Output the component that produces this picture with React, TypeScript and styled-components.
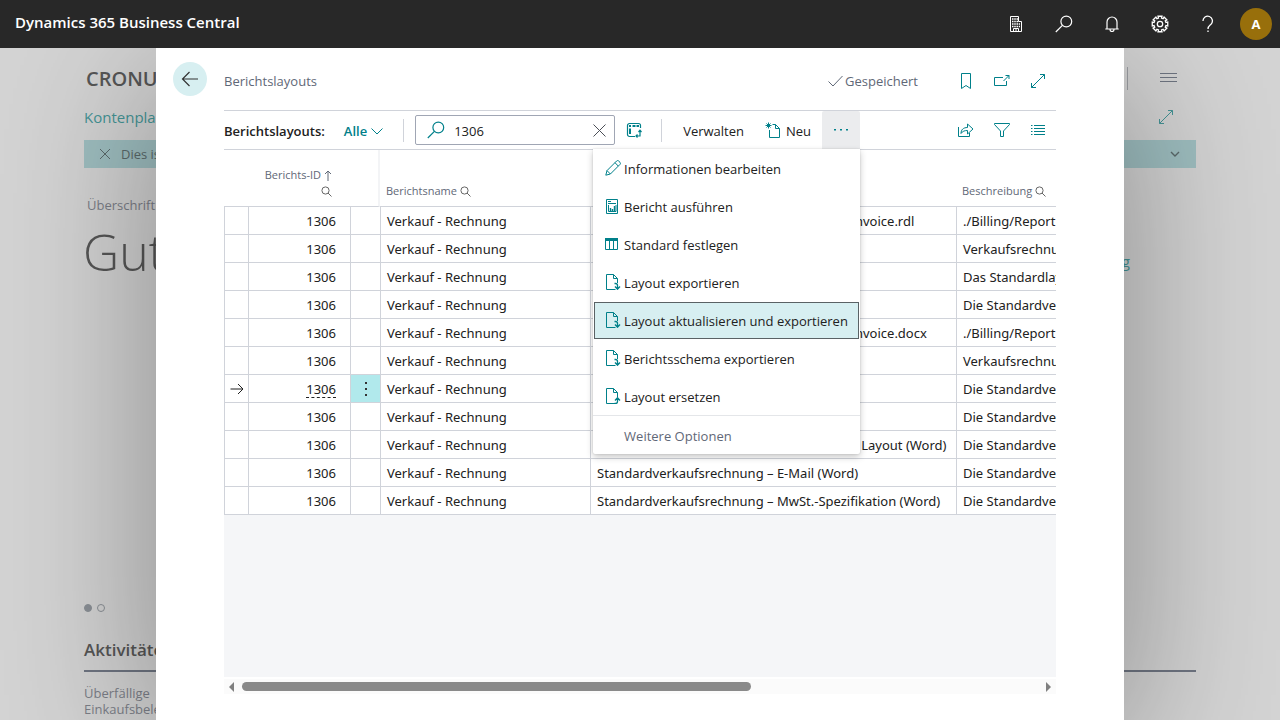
import React from "react";
import styled, { createGlobalStyle } from "styled-components";

const teal = "#00808a";
const line = "#d0d3da";
const ink = "#212121";
const muted = "#5f6877";

const GlobalStyle = createGlobalStyle`
  *, *::before, *::after { box-sizing: border-box; }
  body {
    margin: 0;
    font-family: "Open Sans", "Noto Sans", sans-serif;
    font-size: 13px;
    line-height: 20px;
    color: ${ink};
    background: #d4d4d4;
  }
  button, input { font: inherit; color: inherit; }
  button { border: 0; padding: 0; background: none; cursor: pointer; }
  a { color: inherit; text-decoration: none; }
  svg { display: block; flex: none; }
`;

const Page = styled.div`
  display: flex;
  flex-direction: column;
  min-height: 100vh;
`;

/* ---------- top bar ---------- */

const TopBar = styled.header`
  display: flex;
  align-items: center;
  justify-content: space-between;
  height: 48px;
  padding: 0 8px 0 15px;
  background: #282828;
  color: #fff;
`;

const Product = styled.a`
  font-size: 15px;
  font-weight: 600;
  padding-bottom: 4px;
`;

const TopActions = styled.nav`
  display: flex;
  align-items: center;
`;

const TopButton = styled.button`
  display: grid;
  place-items: center;
  width: 48px;
  height: 48px;
  color: #fff;
`;

const Avatar = styled.button`
  width: 32px;
  height: 32px;
  margin-left: 8px;
  border-radius: 50%;
  background: #986f0b;
  color: #fff;
  font-weight: 700;
`;

/* ---------- role centre behind the dialog ---------- */

const Workspace = styled.div`
  flex: 1;
  display: grid;
  grid-template-columns: minmax(0, 1fr);
  overflow: hidden;
`;

const RoleCenter = styled.div`
  grid-area: 1 / 1;
  display: flex;
  flex-direction: column;
  padding: 0 84px;
  color: #575757;
`;

const CompanyRow = styled.div`
  display: flex;
  align-items: center;
  justify-content: space-between;
  height: 60px;
  padding: 0 19px 0 2px;
`;

const Company = styled.span`
  padding-top: 2px;
  font-size: 20px;
  font-weight: 600;
`;

const CompanyTools = styled.div`
  display: flex;
  align-items: center;
  gap: 32px;
  color: #6f7582;
`;

const ToolDivider = styled.span`
  width: 1px;
  height: 23px;
  background: #9d9fa4;
`;

const NavRow = styled.div`
  display: flex;
  align-items: center;
  justify-content: space-between;
  height: 32px;
  padding: 0 22px 14px 0;
  font-size: 15px;
  color: #459496;
`;

const Notice = styled.div`
  display: flex;
  align-items: center;
  gap: 9px;
  height: 28px;
  padding: 0 14px;
  background: #9fbfc1;
  color: #5b6a6b;
  & > span { flex: 1; }
`;

const Headline = styled.div`
  display: flex;
  align-items: flex-start;
  justify-content: space-between;
  padding: 27px 66px 0 3px;
`;

const HeadlineLabel = styled.div`
  color: #7c7f88;
`;

const Greeting = styled.div`
  margin-left: -4px;
  font-size: 50px;
  line-height: 74px;
  font-weight: 300;
`;

const HeadlineLink = styled.a`
  margin-top: 56px;
  font-size: 15px;
  color: #459496;
`;

const Dots = styled.div`
  display: flex;
  gap: 5px;
  margin-top: 315px;
`;

const Dot = styled.span<{ $on?: boolean }>`
  width: 8px;
  height: 8px;
  border-radius: 50%;
  border: 1px solid #8b9096;
  background: ${(p) => (p.$on ? "#8b9096" : "transparent")};
`;

const Activities = styled.section`
  margin-top: 26px;
`;

const ActivitiesTitle = styled.h2`
  margin: 0;
  padding-bottom: 8px;
  border-bottom: 2px solid #6f7582;
  font-size: 17px;
  line-height: 24px;
  font-weight: 600;
`;

const Cue = styled.div`
  width: 110px;
  padding-top: 13px;
  line-height: 16px;
  color: #7c7f88;
`;

/* ---------- dialog ---------- */

const Overlay = styled.div`
  grid-area: 1 / 1;
  z-index: 1;
  display: flex;
  padding: 0 156px;
`;

const Dialog = styled.main`
  flex: 1;
  min-width: 0;
  display: flex;
  flex-direction: column;
  padding-bottom: 26px;
  background: #fff;
  box-shadow: 0 28px 150px rgba(0, 0, 0, 0.36);
`;

const DialogHeader = styled.div`
  display: flex;
  align-items: center;
  height: 62px;
  padding: 0 68px 0 17px;
  color: ${muted};
`;

const Back = styled.button`
  display: grid;
  place-items: center;
  width: 34px;
  height: 34px;
  border-radius: 50%;
  background: #d7eff1;
  color: #333;
`;

const DialogTitle = styled.h1`
  flex: 1;
  margin: 0;
  padding: 4px 0 0 17px;
  font-size: 13px;
  font-weight: 400;
`;

const Saved = styled.span`
  display: flex;
  align-items: center;
  gap: 2px;
  padding-top: 4px;
  margin-right: 30px;
`;

const IconGroup = styled.div`
  display: flex;
  align-items: center;
  color: ${teal};
`;

const HeaderIcons = styled(IconGroup)`
  padding-top: 4px;
`;

const IconButton = styled.button`
  display: grid;
  place-items: center;
  width: 36px;
  height: 36px;
`;

const DialogBody = styled.div`
  flex: 1;
  display: flex;
  flex-direction: column;
  margin: 0 68px;
`;

const Toolbar = styled.div`
  display: flex;
  align-items: center;
  height: 40px;
  border: solid ${line};
  border-width: 1px 0;
`;

const ViewName = styled.span`
  padding-top: 2px;
  font-weight: 600;
  margin-right: 19px;
`;

const ViewButton = styled.button`
  display: flex;
  align-items: center;
  gap: 4px;
  padding-top: 2px;
  font-weight: 600;
  color: ${teal};
`;

const Divider = styled.span`
  width: 1px;
  height: 23px;
  margin: 0 11px 0 20px;
  background: ${line};
`;

const SearchBox = styled.label`
  display: flex;
  align-items: center;
  width: 200px;
  height: 30px;
  padding: 0 8px 0 11px;
  border: 1px solid #a0a6b4;
  border-radius: 2px;
  color: ${teal};
`;

const SearchInput = styled.input`
  flex: 1;
  min-width: 0;
  height: 26px;
  margin-left: 9px;
  padding: 2px 0 0;
  border: 0;
  outline: 0;
  background: none;
  color: ${ink};
`;

const ClearButton = styled.button`
  padding-top: 1px;
  color: #4b4f57;
`;

const AnalyzeButton = styled.button`
  display: grid;
  place-items: center;
  width: 38px;
  height: 36px;
  margin-right: -12px;
  color: ${teal};
`;

const ActionButton = styled.button`
  display: flex;
  align-items: center;
  gap: 5px;
  height: 38px;
  padding: 1px 11px 0 10px;
  & > svg { color: ${teal}; margin-bottom: 2px; }
`;

const MoreAnchor = styled.div`
  position: relative;
  flex: 1;
`;

const MoreButton = styled.button`
  display: grid;
  place-items: center;
  width: 38px;
  height: 38px;
  border-radius: 2px 2px 0 0;
  background: #ebecee;
  color: ${teal};
`;

const Menu = styled.div`
  position: absolute;
  z-index: 2;
  top: 38px;
  left: -229px;
  width: 267px;
  background: #fff;
  box-shadow: 0 3px 7px rgba(0, 0, 0, 0.22), 0 0 2px rgba(0, 0, 0, 0.14);
  border-radius: 0 0 2px 2px;
`;

const MenuItem = styled.button<{ $active?: boolean }>`
  display: flex;
  align-items: center;
  gap: 3px;
  width: calc(100% - 2px);
  height: 37px;
  margin: 0 1px;
  padding: 0 0 0 10px;
  border: 1px solid ${(p) => (p.$active ? "#5a6265" : "transparent")};
  background: ${(p) => (p.$active ? "#d7eff1" : "transparent")};
  white-space: nowrap;
  text-align: left;
  & > svg { color: ${teal}; margin-bottom: 2px; }
`;

const MenuList = styled.div`
  display: flex;
  flex-direction: column;
  gap: 1px;
  padding-top: 1px;
  border-bottom: 1px solid #e4e6e9;
`;

const MenuMore = styled.button`
  display: block;
  width: 100%;
  height: 38px;
  padding: 2px 0 0 31px;
  text-align: left;
  color: ${muted};
`;

/* ---------- grid ---------- */

const GridArea = styled.div`
  flex: 1;
  background: #f5f6f8;
  overflow: hidden;
`;

const Grid = styled.table`
  width: 100%;
  table-layout: fixed;
  border-collapse: separate;
  border-spacing: 0;
  background: #fff;
`;

const GridBody = styled.tbody`
  font-family: "Noto Sans", "Open Sans", sans-serif;
`;

const Col = styled.col<{ $w?: number }>`
  width: ${(p) => (p.$w ? `${p.$w}px` : "auto")};
`;

const HeadCell = styled.th<{ $right?: boolean; $mark?: boolean }>`
  height: 57px;
  padding: 0 0 7px 6px;
  padding-right: ${(p) => (p.$right ? "18px" : "0")};
  border-bottom: 1px solid ${line};
  border-right: ${(p) => (p.$mark ? "2px solid #f3f4f6" : "0")};
  vertical-align: bottom;
  text-align: ${(p) => (p.$right ? "right" : "left")};
  font-size: 11px;
  line-height: 16px;
  font-weight: 400;
  color: ${muted};
  white-space: nowrap;
`;

const HeadInner = styled.span<{ $end?: boolean }>`
  display: flex;
  align-items: center;
  justify-content: ${(p) => (p.$end ? "flex-end" : "flex-start")};
  gap: 3px;
  height: 16px;
`;

const Cell = styled.td<{ $right?: boolean; $center?: boolean; $hot?: boolean }>`
  height: 28px;
  padding: ${(p) => (p.$center ? "0" : p.$right ? "0 14px 0 0" : "0 0 0 6px")};
  border: solid ${line};
  border-width: 0 0 1px 1px;
  text-align: ${(p) => (p.$right ? "right" : "left")};
  background: ${(p) => (p.$hot ? "#b1e9ec" : "transparent")};
  white-space: nowrap;
  overflow: hidden;
  & > svg { margin: 0 auto; }
`;

const IdLink = styled.a<{ $current?: boolean }>`
  display: inline-block;
  line-height: 16px;
  border-bottom: 1px ${(p) => (p.$current ? "dashed #212121" : "solid transparent")};
`;

const RowMenu = styled.button`
  display: grid;
  place-items: center;
  width: 100%;
  height: 27px;
`;

const ScrollBar = styled.div`
  display: flex;
  align-items: center;
  gap: 4px;
  height: 15px;
  margin-top: 2px;
  padding: 0 4px;
  background: #fbfbfb;
  color: #808080;
`;

const Track = styled.div`
  flex: 1;
`;

const Thumb = styled.div`
  width: 64%;
  height: 9px;
  border-radius: 5px;
  background: #8a8a8a;
`;

/* ---------- icons ---------- */

type IconProps = { d: string; w?: number; h?: number; sw?: number; children?: React.ReactNode };

const Icon = ({ d, w = 16, h = 16, sw = 1, children }: IconProps) => (
  <svg width={w} height={h} viewBox={`0 0 ${w} ${h}`} fill="none" stroke="currentColor" strokeWidth={sw} aria-hidden="true">
    <path d={d} />
    {children}
  </svg>
);

const gearOutline = (() => {
  const pts: string[] = [];
  for (let i = 0; i < 8; i++) {
    const a = (i * Math.PI) / 4;
    const at = (r: number, o: number) => `${(9 + r * Math.cos(a + o)).toFixed(2)} ${(9 + r * Math.sin(a + o)).toFixed(2)}`;
    pts.push(at(6.1, -0.25), at(8, -0.25), at(8, 0.25), at(6.1, 0.25));
  }
  return `M${pts.join("L")}Z`;
})();

const SearchGlyph = () => (
  <svg width="18" height="18" viewBox="0 0 18 18" fill="none" stroke="currentColor" strokeWidth="1.2" aria-hidden="true">
    <circle cx="11.3" cy="6.5" r="5.4" />
    <path d="M7.4 10.4L.8 17" />
  </svg>
);

const SmallSearch = () => (
  <svg width="11" height="11" viewBox="0 0 11 11" fill="none" stroke="#666" aria-hidden="true">
    <circle cx="4.5" cy="4.5" r="3.6" />
    <path d="M7 7l3.5 3.5" />
  </svg>
);

const Expand = () => <Icon d="M1.5 14.5l13-13M10 1.500h4.500V6M1.500 10v4.500H6" />;

const docBody = "M10.5 15.5H1.5V.5h7l4 4V9M8.5 .5v4h4";
const menuIcons = {
  edit: <Icon d="M.8 15.2L2 10.6 11.6 1a1.5 1.5 0 0 1 2.1 0l1.3 1.3a1.5 1.5 0 0 1 0 2.1L5.4 14zM2 10.6L5.4 14M10 2.7l3.3 3.4" />,
  run: (
    <Icon d="M1.5 1.5h11v14h-11z">
      <path d="M3 3.5h3M3 5.5h8" />
      <path d="M3.5 7v6.5h7.5V7" />
      <path d="M5.5 13v-3M7.5 13v-2M9.5 13V8" strokeWidth="1.4" />
    </Icon>
  ),
  table: (
    <Icon d="M.5 2.500h12v11H.5zM4.500 4v9M8.500 4v9">
      <path d="M0 3.5h13" strokeWidth="3" />
    </Icon>
  ),
  export: (
    <Icon d={docBody}>
      <path d="M9.5 9.5h1q2 0 2 2v3.5M10 12.5l2.500 2.700 2.500-2.700" strokeWidth="1.3" />
    </Icon>
  ),
  replace: (
    <Icon d={docBody}>
      <path d="M9.5 15.5h1q2 0 2-2V10M10 12.5l2.500-2.700 2.500 2.700" strokeWidth="1.3" />
    </Icon>
  ),
};

/* ---------- data ---------- */

const actions: { icon: keyof typeof menuIcons; label: string; active?: boolean }[] = [
  { icon: "edit", label: "Informationen bearbeiten" },
  { icon: "run", label: "Bericht ausführen" },
  { icon: "table", label: "Standard festlegen" },
  { icon: "export", label: "Layout exportieren" },
  { icon: "export", label: "Layout aktualisieren und exportieren", active: true },
  { icon: "export", label: "Berichtsschema exportieren" },
  { icon: "replace", label: "Layout ersetzen" },
];

const rows: { layout: string; text: string; current?: boolean }[] = [
  { layout: "./Billing/Reports/Contracts/StandardSalesInvoice.rdl", text: "./Billing/Report Extensions" },
  { layout: "Verkaufsrechnung", text: "Verkaufsrechnung" },
  { layout: "Standardlayout", text: "Das Standardlayout" },
  { layout: "Standardverkaufsrechnung", text: "Die Standardverkaufsrechnung" },
  { layout: "./Billing/Reports/Contracts/StandardSalesInvoice.docx", text: "./Billing/Report Extensions" },
  { layout: "Verkaufsrechnung", text: "Verkaufsrechnung" },
  { layout: "Standardverkaufsrechnung", text: "Die Standardverkaufsrechnung", current: true },
  { layout: "Standardverkaufsrechnung", text: "Die Standardverkaufsrechnung" },
  { layout: "Standardverkaufsrechnung – Designfähige Layout (Word)", text: "Die Standardverkaufsrechnung" },
  { layout: "Standardverkaufsrechnung – E-Mail (Word)", text: "Die Standardverkaufsrechnung" },
  { layout: "Standardverkaufsrechnung – MwSt.-Spezifikation (Word)", text: "Die Standardverkaufsrechnung" },
];

export default function App() {
  return (
    <Page>
      <GlobalStyle />
      <TopBar>
        <Product href="#">Dynamics 365 Business Central</Product>
        <TopActions>
          <TopButton aria-label="Umgebung">
            <Icon w={12} h={16} d="M.5 .5h8v5h3v10H.5zM3.500 15.500v-3h5v3M6 12.500v3">
              <path d="M2 3h6M2 5.500h6M2 8h8M2 10.500h8" strokeWidth="1.5" strokeDasharray="1.500 .75" />
            </Icon>
          </TopButton>
          <TopButton aria-label="Suchen"><SearchGlyph /></TopButton>
          <TopButton aria-label="Benachrichtigungen">
            <Icon w={14} h={16} sw={1.2} d="M.3 13h13.400M2 13V6a5 5 0 0 1 10 0v7M5 13.500a2 2 0 0 0 4 0" />
          </TopButton>
          <TopButton aria-label="Einstellungen">
            <Icon w={18} h={18} sw={1.3} d={gearOutline}><circle cx="9" cy="9" r="2.7" /></Icon>
          </TopButton>
          <TopButton aria-label="Hilfe">
            <Icon w={12} h={18} sw={1.3} d="M1 6a4.700 4.700 0 1 1 8 3.200C7.200 10.700 6 11.300 6 14M6 15.500v1.600" />
          </TopButton>
          <Avatar aria-label="Konto">A</Avatar>
        </TopActions>
      </TopBar>

      <Workspace>
        <RoleCenter>
          <CompanyRow>
            <Company>CRONUS</Company>
            <CompanyTools>
              <ToolDivider />
              <Icon w={17} h={10} d="M0 .5h17M0 4.500h17M0 8.500h17" />
            </CompanyTools>
          </CompanyRow>
          <NavRow>
            <a href="#">Kontenplan</a>
            <Expand />
          </NavRow>
          <Notice>
            <Icon w={14} h={12} d="M2 1l10 10M12 1L2 11" />
            <span>Dies ist</span>
            <Icon w={14} h={8} sw={1.4} d="M3 2l4 4 4-4" />
          </Notice>
          <Headline>
            <div>
              <HeadlineLabel>Überschrift</HeadlineLabel>
              <Greeting>Guten</Greeting>
            </div>
            <HeadlineLink href="#">Rechnung</HeadlineLink>
          </Headline>
          <Dots><Dot $on /><Dot /></Dots>
          <Activities>
            <ActivitiesTitle>Aktivitäten</ActivitiesTitle>
            <Cue>Überfällige Einkaufsbelege</Cue>
          </Activities>
        </RoleCenter>

        <Overlay>
          <Dialog>
            <DialogHeader>
              <Back aria-label="Zurück"><Icon w={18} h={16} sw={1.2} d="M17 8H1.500M8.500 1l-7 7 7 7" /></Back>
              <DialogTitle>Berichtslayouts</DialogTitle>
              <Saved>
                <Icon w={15} h={12} d="M.5 6.500l4.500 4.500L14.500 1" />
                Gespeichert
              </Saved>
              <HeaderIcons>
                <IconButton aria-label="Lesezeichen"><Icon w={12} h={16} d="M1.500 .5h9v15L6 12.500l-4.500 3z" /></IconButton>
                <IconButton aria-label="In neuem Fenster öffnen"><Icon d="M9 4.500H.5v8h12V8M9.500 8L15 2.500M11.500 2.500h3.500V6" /></IconButton>
                <IconButton aria-label="Vergrößern"><Expand /></IconButton>
              </HeaderIcons>
            </DialogHeader>

            <DialogBody>
              <Toolbar>
                <ViewName>Berichtslayouts:</ViewName>
                <ViewButton>
                  Alle
                  <Icon w={12} h={8} d="M.5 1.500L6 7l5.500-5.500" />
                </ViewButton>
                <Divider />
                <SearchBox>
                  <SearchGlyph />
                  <SearchInput aria-label="Suchen" defaultValue="1306" />
                  <ClearButton aria-label="Suche löschen"><Icon w={13} h={13} d="M.5 .5l12 12M12.500 .5l-12 12" /></ClearButton>
                </SearchBox>
                <AnalyzeButton aria-label="Analysieren">
                  <Icon d="M9 14.500H3.500a2 2 0 0 1-2-2v-9a2 2 0 0 1 2-2h9a2 2 0 0 1 2 2V6" sw={1.2}>
                    <path d="M3 4h2M6.500 4h3M10.500 4h2.500" strokeWidth="2" />
                    <path d="M4 6.500v5.500" strokeWidth="2" />
                    <path d="M10 14h4V8.500M12.500 10l1.500-1.800L15.500 10M11.500 12.500L10 14l1.500 1.500" />
                  </Icon>
                </AnalyzeButton>
                <Divider />
                <ActionButton>Verwalten</ActionButton>
                <ActionButton>
                  <Icon d="M7.500 2.500h3l4 4v9h-10V8M10.500 2.500v4h4M3.500 .5v6M.5 3.500h6M1.500 1.500l4 4M5.500 1.500l-4 4" />
                  Neu
                </ActionButton>
                <MoreAnchor>
                  <MoreButton aria-label="Weitere Aktionen" aria-expanded="true">
                    <svg width="16" height="4" viewBox="0 0 16 4" fill="currentColor" aria-hidden="true">
                      <path d="M1 1h2v1.500H1zM7 1h2v1.500H7zM13 1h2v1.500h-2z" />
                    </svg>
                  </MoreButton>
                  <Menu role="menu">
                    <MenuList>
                      {actions.map((a) => (
                        <MenuItem key={a.label} role="menuitem" $active={a.active}>
                          {menuIcons[a.icon]}
                          {a.label}
                        </MenuItem>
                      ))}
                    </MenuList>
                    <MenuMore role="menuitem">Weitere Optionen</MenuMore>
                  </Menu>
                </MoreAnchor>
                <IconGroup>
                  <IconButton aria-label="Teilen"><Icon d="M.5 5v9.500h11V11M3 11.500C3 7.500 5.500 5.500 9.500 5.500V2l5.500 5-5.500 5V8.500C7 8.500 4.500 9 3 11.500z" /></IconButton>
                  <IconButton aria-label="Filtern"><Icon d="M.5 1.500h15v1L9.500 9v5.500h-3V9l-6-6.500z" /></IconButton>
                  <IconButton aria-label="Liste"><Icon d="M1 3.500h1.500M4 3.500h11M1 6.500h1.500M4 6.500h11M1 9.500h1.500M4 9.500h11M1 12.500h1.500M4 12.500h11" /></IconButton>
                </IconGroup>
              </Toolbar>

              <GridArea>
                <Grid>
                  <colgroup>
                    <Col $w={24} /><Col $w={102} /><Col $w={30} /><Col $w={210} /><Col $w={366} /><Col />
                  </colgroup>
                  <thead>
                    <tr>
                      <HeadCell />
                      <HeadCell $right>
                        <HeadInner $end>
                          Berichts-ID
                          <Icon w={8} h={11} d="M4 11V1M1 4l3-3 3 3" />
                        </HeadInner>
                        <HeadInner $end><SmallSearch /></HeadInner>
                      </HeadCell>
                      <HeadCell $mark />
                      <HeadCell><HeadInner>Berichtsname<SmallSearch /></HeadInner></HeadCell>
                      <HeadCell><HeadInner>Name<SmallSearch /></HeadInner></HeadCell>
                      <HeadCell><HeadInner>Beschreibung<SmallSearch /></HeadInner></HeadCell>
                    </tr>
                  </thead>
                  <GridBody>
                    {rows.map((r, i) => (
                      <tr key={i}>
                        <Cell $center>{r.current && <Icon w={14} h={12} d="M.5 6h12.500M8 1l5 5-5 5" />}</Cell>
                        <Cell $right><IdLink href="#" $current={r.current}>1306</IdLink></Cell>
                        <Cell $center $hot={r.current}>
                          {r.current && (
                            <RowMenu aria-label="Zeilenmenü">
                              <svg width="2" height="14" viewBox="0 0 2 14" fill="#333" aria-hidden="true">
                                <path d="M0 0h2v2H0zM0 6h2v2H0zM0 12h2v2H0z" />
                              </svg>
                            </RowMenu>
                          )}
                        </Cell>
                        <Cell>Verkauf - Rechnung</Cell>
                        <Cell>{r.layout}</Cell>
                        <Cell>{r.text}</Cell>
                      </tr>
                    ))}
                  </GridBody>
                </Grid>
              </GridArea>
              <ScrollBar>
                <svg width="10" height="10" viewBox="0 0 10 10" fill="currentColor" aria-hidden="true"><path d="M6 0v10L1 5z" /></svg>
                <Track><Thumb /></Track>
                <svg width="10" height="10" viewBox="0 0 10 10" fill="currentColor" aria-hidden="true"><path d="M4 0v10l5-5z" /></svg>
              </ScrollBar>
            </DialogBody>
          </Dialog>
        </Overlay>
      </Workspace>
    </Page>
  );
}
